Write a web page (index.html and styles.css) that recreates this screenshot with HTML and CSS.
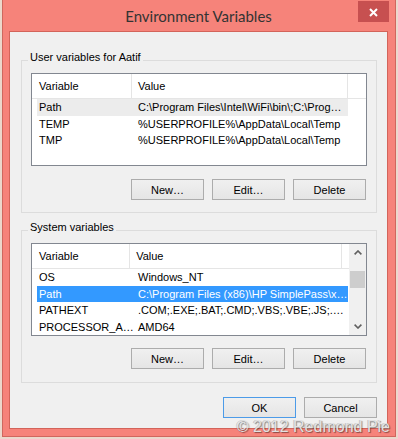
FILE: index.html
```html
<!DOCTYPE html>
<html lang="en">
<head>
  <meta charset="UTF-8" />
  <title>Environment Variables</title>
  <link rel="stylesheet" href="styles.css">
</head>
<body>
  <div class="window">
    <div class="titlebar">
      <span></span>
      <div class="title">Environment Variables</div>
      <div class="close">
        <svg width="9" height="9" viewBox="0 0 9 9"><path d="M1 1L8 8M8 1L1 8" stroke="#fff" stroke-width="2" fill="none"/></svg>
      </div>
    </div>

    <div class="client">
      <fieldset class="group">
        <legend>User variables for Aatif</legend>
        <div class="list">
          <div class="list-body">
            <div class="list-head">
              <div class="col col-var">Variable</div>
              <div class="col col-val">Value</div>
              <div class="col col-rest"></div>
            </div>
            <div class="row dim"><span class="cell var">Path</span><span class="cell val">C:\Program Files\Intel\WiFi\bin\;C:\Prog…</span></div>
            <div class="row"><span class="cell var">TEMP</span><span class="cell val">%USERPROFILE%\AppData\Local\Temp</span></div>
            <div class="row"><span class="cell var">TMP</span><span class="cell val">%USERPROFILE%\AppData\Local\Temp</span></div>
          </div>
        </div>
        <div class="buttons">
          <button type="button">New…</button>
          <button type="button">Edit…</button>
          <button type="button">Delete</button>
        </div>
      </fieldset>

      <fieldset class="group system">
        <legend>System variables</legend>
        <div class="list">
          <div class="list-body">
            <div class="list-head">
              <div class="col col-var">Variable</div>
              <div class="col col-val">Value</div>
              <div class="col col-rest"></div>
            </div>
            <div class="row"><span class="cell var">OS</span><span class="cell val">Windows_NT</span></div>
            <div class="row selected"><span class="cell var">Path</span><span class="cell val">C:\Program Files (x86)\HP SimplePass\x…</span></div>
            <div class="row"><span class="cell var">PATHEXT</span><span class="cell val">.COM;.EXE;.BAT;.CMD;.VBS;.VBE;.JS;.…</span></div>
            <div class="row"><span class="cell var">PROCESSOR_A…</span><span class="cell val">AMD64</span></div>
          </div>
          <div class="scrollbar">
            <div class="arrow">
              <svg width="8" height="5" viewBox="0 0 8 5"><path d="M0.6 4.4L4 1L7.4 4.4" stroke="#606060" stroke-width="1.6" fill="none"/></svg>
            </div>
            <div class="thumb"></div>
            <div class="track"></div>
            <div class="arrow">
              <svg width="8" height="5" viewBox="0 0 8 5"><path d="M0.6 0.6L4 4L7.4 0.6" stroke="#606060" stroke-width="1.6" fill="none"/></svg>
            </div>
          </div>
        </div>
        <div class="buttons">
          <button type="button">New…</button>
          <button type="button">Edit…</button>
          <button type="button">Delete</button>
        </div>
      </fieldset>

      <div class="dialog-buttons">
        <button type="button" class="default">OK</button>
        <button type="button">Cancel</button>
      </div>
    </div>

    <div class="watermark">© 2012 Redmond Pie</div>
  </div>
</body>
</html>
```

FILE: styles.css
```css
* {
  box-sizing: border-box;
}
body {
  margin: 0;
  background: #ecd8cc;
  font-family: "Liberation Sans", Arial, sans-serif;
  font-size: 11px;
  color: #000;
}
.window {
  position: relative;
  margin-left: 2px;
  width: 394px;
  height: 437px;
  background: #f6837a;
  border: 1px solid #cf675e;
  border-top: 0;
  padding: 0 7px 7px 6px;
  display: flex;
  flex-direction: column;
}
.titlebar {
  height: 31px;
  display: grid;
  grid-template-columns: 1fr auto 1fr;
}
.title {
  font-family: "Segoe UI", Lato, sans-serif;
  font-size: 15px;
  line-height: 32px;
  color: #333;
}
.close {
  justify-self: end;
  width: 31px;
  height: 21px;
  margin: 1px -1px 0 0;
  padding-top: 1px;
  background: #c75050;
  display: flex;
  align-items: center;
  justify-content: center;
}
.client {
  flex: 1;
  background: #f0f0f0;
  border: 1px solid #d3645a;
}
.group {
  margin: 18px 10px 0 11px;
  padding: 3px 9px 12px;
  border: 1px solid #dcdcdc;
  min-width: 0;
}
.group.system {
  margin-top: 7px;
  padding-bottom: 13px;
}
legend {
  margin-left: -3px;
  padding: 0 2px 6px;
  line-height: 14px;
}
.list {
  height: 93px;
  border: 1px solid #828790;
  background: #fff;
  display: flex;
}
.list-body {
  flex: 1;
  overflow: hidden;
}
.list-head {
  display: flex;
  height: 25px;
  border-bottom: 1px solid #e5e5e5;
}
.col {
  padding-left: 7px;
  line-height: 24px;
  border-right: 1px solid #e5e5e5;
}
.col-var {
  width: 100px;
}
.col-val {
  width: 216px;
  padding-left: 6px;
}
.col-rest {
  flex: 1;
  border-right: 0;
}
.row {
  display: flex;
  margin-left: 5px;
  width: 311px;
  height: 16.6px;
  line-height: 16px;
}
.row.dim {
  background: #ececec;
}
.row.selected {
  background: #3399ff;
  color: #fff;
}
.cell {
  white-space: nowrap;
}
.cell.var {
  width: 95px;
  padding-left: 2px;
}
.cell.val {
  width: 216px;
  padding-left: 6px;
  overflow: hidden;
}
.scrollbar {
  width: 17px;
  background: #f0f0f0;
  display: flex;
  flex-direction: column;
  align-items: center;
}
.arrow {
  height: 17px;
  display: flex;
  align-items: center;
  justify-content: center;
}
.thumb {
  margin-top: 10px;
  width: 15px;
  height: 17px;
  background: #cdcdcd;
}
.track {
  flex: 1;
}
.buttons {
  display: flex;
  justify-content: flex-end;
  gap: 8px;
  margin-top: 13px;
  padding-right: 1px;
}
.system .buttons {
  margin-top: 12px;
}
button {
  width: 73px;
  height: 21px;
  padding: 0;
  font: inherit;
  color: #000;
  border: 1px solid #acacac;
  background: linear-gradient(#f0f0f0, #e5e5e5);
}
button.default {
  border-color: #4c9be8;
}
.dialog-buttons {
  display: flex;
  justify-content: flex-end;
  gap: 8px;
  margin: 14px 10px 0 0;
}
.watermark {
  position: absolute;
  right: 5px;
  bottom: 1px;
  font-family: "Liberation Sans", Arial, sans-serif;
  font-size: 16px;
  line-height: 16px;
  color: #e2e2e2;
  text-shadow: 1px 1px 1px rgba(0, 0, 0, 0.45), -1px 0 0 rgba(90, 90, 90, 0.3);
}
```
